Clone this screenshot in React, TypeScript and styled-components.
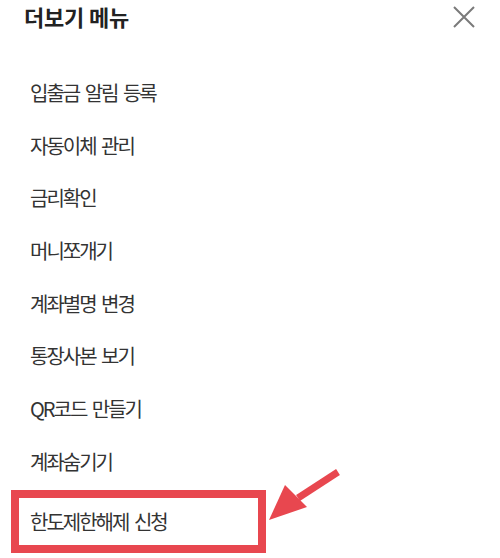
import React from "react"
import styled, { createGlobalStyle } from "styled-components"

const GlobalStyle = createGlobalStyle`
  html, body {
    margin: 0;
    padding: 0;
    background: #ffffff;
  }
  body {
    font-family: "Noto Sans CJK KR", "Noto Sans", sans-serif;
  }
`

const Sheet = styled.div`
  position: relative;
  width: 500px;
  height: 558px;
  overflow: hidden;
  background: #ffffff;
`

const Header = styled.div`
  display: flex;
  align-items: flex-start;
  justify-content: space-between;
  height: 66px;
  padding: 0 24px 0 24px;
  box-sizing: border-box;
`

const Title = styled.h1`
  margin: 0;
  font-size: 22px;
  line-height: 32px;
  font-weight: 700;
  color: #222222;
  letter-spacing: -0.2px;
`

const CloseButton = styled.button`
  border: 0;
  background: none;
  padding: 0;
  margin-top: 6px;
  margin-right: 1px;
  width: 22px;
  height: 22px;
  cursor: pointer;
  display: flex;
`

const Menu = styled.ul`
  list-style: none;
  margin: 0;
  padding: 0;
`

const Item = styled.li<{ $highlighted?: boolean }>`
  height: 52.7px;
  display: flex;
  align-items: center;
  padding-left: 30px;
  font-size: 20px;
  letter-spacing: -2px;
  word-spacing: 3px;
  color: #333333;
  box-sizing: border-box;

  ${(p) =>
    p.$highlighted &&
    `
    width: 255px;
    height: 63px;
    margin: 2px 0 0 11px;
    padding-left: 11px;
    border: 8px solid #e8474f;
  `}
`

const Arrow = styled.svg`
  position: absolute;
  left: 260px;
  top: 460px;
`

const items = [
  "입출금 알림 등록",
  "자동이체 관리",
  "금리확인",
  "머니쪼개기",
  "계좌별명 변경",
  "통장사본 보기",
  "QR코드 만들기",
  "계좌숨기기",
]

export default function App() {
  return (
    <Sheet>
      <GlobalStyle />
      <Header>
        <Title>더보기 메뉴</Title>
        <CloseButton aria-label="닫기">
          <svg width="22" height="22" viewBox="0 0 22 22">
            <path d="M1 1L21 21M21 1L1 21" stroke="#7a7a7a" strokeWidth="2" fill="none" />
          </svg>
        </CloseButton>
      </Header>
      <Menu>
        {items.map((label) => (
          <Item key={label}>{label}</Item>
        ))}
        <Item $highlighted>한도제한해제 신청</Item>
      </Menu>
      {/* annotation arrow over the content */}
      <Arrow width="90" height="70" viewBox="0 0 90 70">
        <path d="M78 12L38 38" stroke="#e8474f" strokeWidth="7" strokeLinecap="butt" />
        <polygon points="9,60 25,25 47,47" fill="#e8474f" />
      </Arrow>
    </Sheet>
  )
}
